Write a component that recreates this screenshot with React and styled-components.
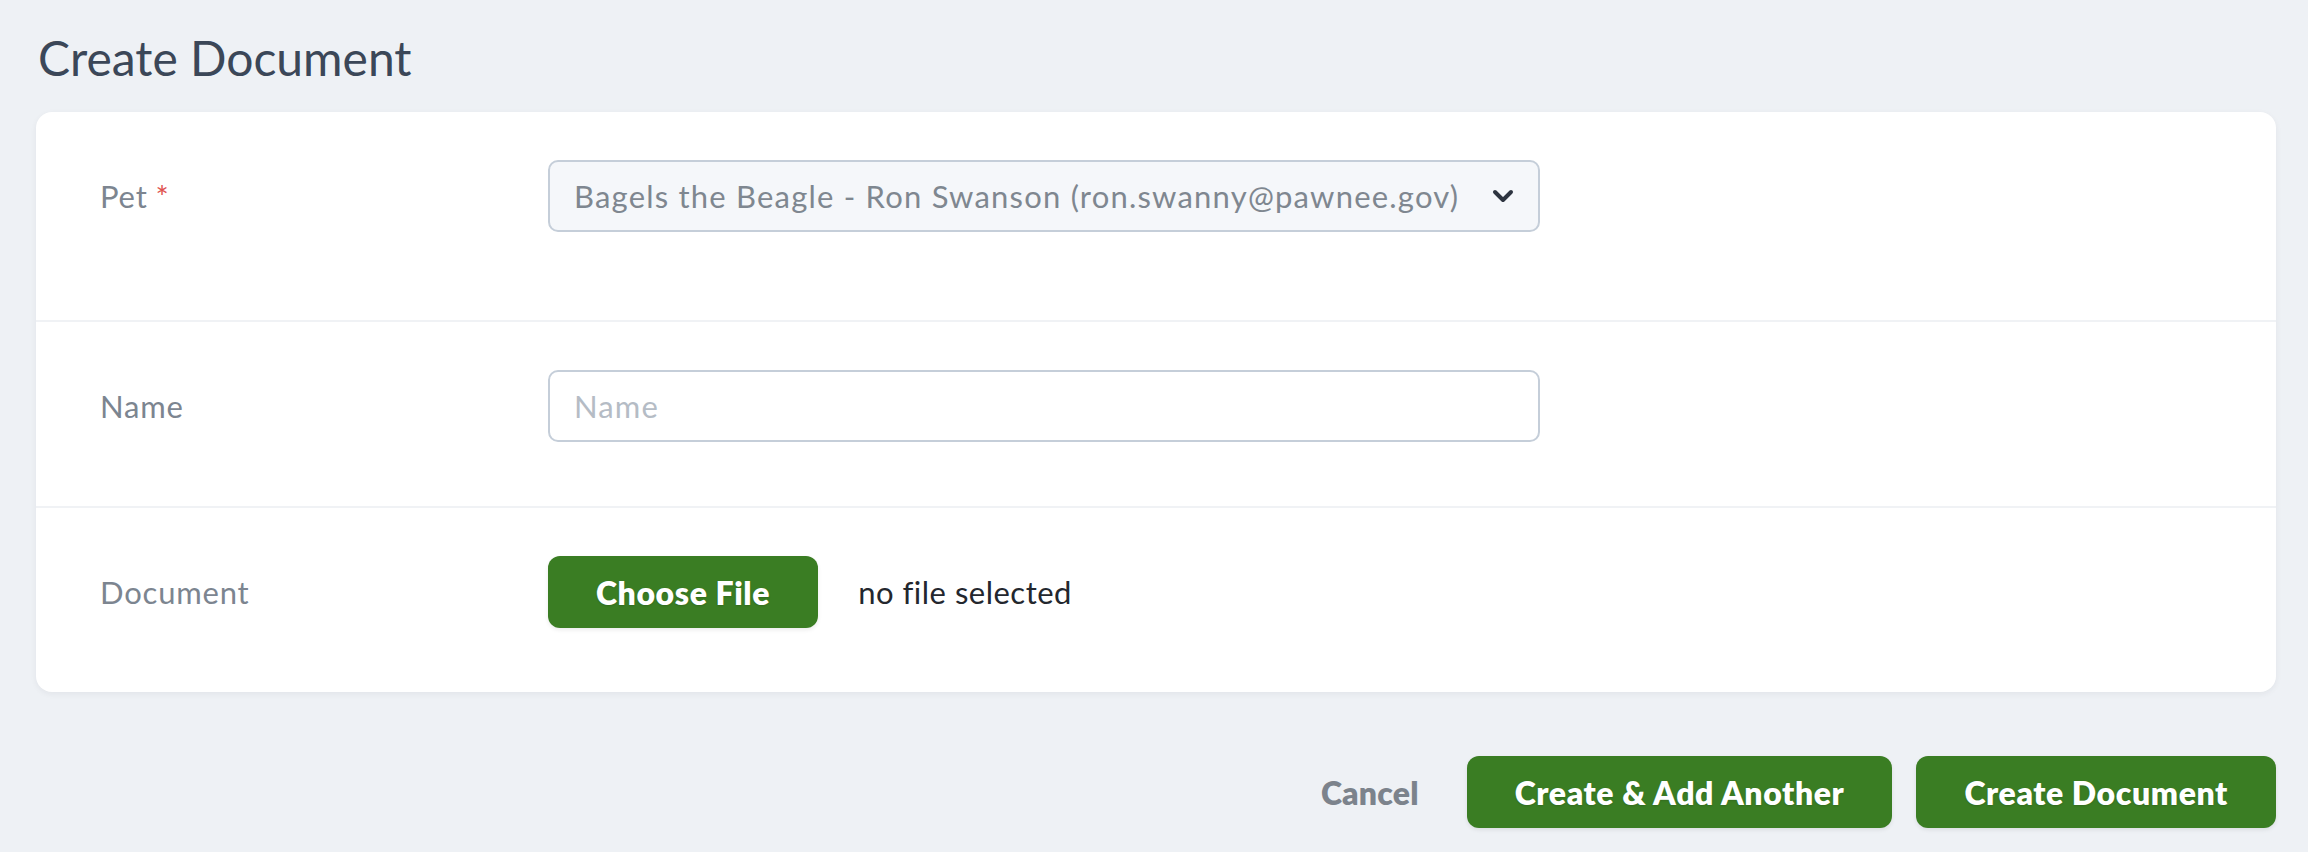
import React from "react";
import styled, { createGlobalStyle } from "styled-components";

const GlobalStyle = createGlobalStyle`
  html, body {
    margin: 0;
    padding: 0;
    background: #eef1f5;
    font-family: Lato, "Noto Sans", "Liberation Sans", sans-serif;
  }
  * { box-sizing: border-box; }
`;

const Page = styled.div`
  padding: 26px 32px 24px 36px;
`;

const Heading = styled.h1`
  margin: 0 0 22px 2px;
  font-size: 48px;
  line-height: 64px;
  font-weight: 400;
  color: #3b4758;
`;

const Card = styled.div`
  background: #ffffff;
  border-radius: 16px;
  box-shadow: 0 2px 6px rgba(30, 41, 59, 0.06);
`;

const FieldRow = styled.div`
  display: flex;
  align-items: flex-start;
  padding-top: 48px;
  padding-bottom: ${(p) => p.$bottom}px;
  border-top: ${(p) => (p.$first ? "none" : "2px solid #f0f2f5")};
`;

const LabelCol = styled.div`
  width: 20%;
  padding: 0 64px;
  height: 72px;
  display: flex;
  align-items: center;
`;

const Label = styled.label`
  font-size: 31px;
  letter-spacing: 0.8px;
  color: #7c8590;
`;

const Required = styled.span`
  color: #e0524f;
  margin-left: 8px;
`;

const FieldCol = styled.div`
  width: 50%;
  padding: 0 64px;
  display: flex;
  align-items: center;
`;

const SelectWrap = styled.div`
  position: relative;
  width: 100%;
`;

const Select = styled.select`
  appearance: none;
  -webkit-appearance: none;
  width: 100%;
  height: 72px;
  padding: 0 64px 0 24px;
  border: 2px solid #c5ced9;
  border-radius: 10px;
  background: #f5f7fa;
  font-family: inherit;
  font-size: 31px;
  letter-spacing: 1.2px;
  color: #7f8790;
  outline: none;
`;

const Chevron = styled.svg`
  position: absolute;
  right: 26px;
  top: 50%;
  transform: translateY(-50%);
  width: 22px;
  height: 14px;
  pointer-events: none;
`;

const TextInput = styled.input`
  width: 100%;
  height: 72px;
  padding: 0 24px;
  border: 2px solid #c5ced9;
  border-radius: 10px;
  background: #ffffff;
  font-family: inherit;
  font-size: 31px;
  letter-spacing: 1.1px;
  color: #3b4758;
  outline: none;
  &::placeholder {
    color: #b5bcc5;
  }
`;

const GreenButton = styled.button`
  height: 72px;
  padding: 0 48px;
  border: none;
  border-radius: 12px;
  background: #3a7d23;
  color: #ffffff;
  font-family: inherit;
  font-size: 32px;
  letter-spacing: 0.6px;
  font-weight: 800;
  cursor: pointer;
  box-shadow: 0 2px 4px rgba(0, 0, 0, 0.08);
  text-shadow: 0 1px 2px rgba(0, 0, 0, 0.15);
  white-space: nowrap;
`;

const FileStatus = styled.span`
  margin-left: 40px;
  font-size: 31px;
  letter-spacing: 0.5px;
  color: #23272e;
`;

const HiddenFile = styled.input`
  display: none;
`;

const Actions = styled.div`
  display: flex;
  justify-content: flex-end;
  align-items: center;
  gap: 24px;
  margin-top: 64px;
`;

const CancelButton = styled.button`
  height: 72px;
  padding: 0 24px;
  border: none;
  background: transparent;
  color: #7c838c;
  font-family: inherit;
  font-size: 32px;
  letter-spacing: 0.2px;
  font-weight: 800;
  cursor: pointer;
`;

export default function App() {
  return (
    <>
      <GlobalStyle />
      <Page>
        <Heading>Create Document</Heading>
        <Card>
          <FieldRow $first $bottom={88}>
            <LabelCol>
              <Label>
                Pet<Required>*</Required>
              </Label>
            </LabelCol>
            <FieldCol>
              <SelectWrap>
                <Select defaultValue="bagels">
                  <option value="bagels">
                    Bagels the Beagle - Ron Swanson (ron.swanny@pawnee.gov)
                  </option>
                </Select>
                <Chevron viewBox="0 0 22 14" fill="none">
                  <path
                    d="M3 3l8 8 8-8"
                    stroke="#2d3440"
                    strokeWidth="4"
                    strokeLinecap="round"
                    strokeLinejoin="round"
                  />
                </Chevron>
              </SelectWrap>
            </FieldCol>
          </FieldRow>
          <FieldRow $bottom={64}>
            <LabelCol>
              <Label>Name</Label>
            </LabelCol>
            <FieldCol>
              <TextInput type="text" placeholder="Name" />
            </FieldCol>
          </FieldRow>
          <FieldRow $bottom={64}>
            <LabelCol>
              <Label>Document</Label>
            </LabelCol>
            <FieldCol>
              <GreenButton type="button">Choose File</GreenButton>
              <HiddenFile type="file" />
              <FileStatus>no file selected</FileStatus>
            </FieldCol>
          </FieldRow>
        </Card>
        <Actions>
          <CancelButton type="button">Cancel</CancelButton>
          <GreenButton type="button">Create &amp; Add Another</GreenButton>
          <GreenButton type="button">Create Document</GreenButton>
        </Actions>
      </Page>
    </>
  );
}
